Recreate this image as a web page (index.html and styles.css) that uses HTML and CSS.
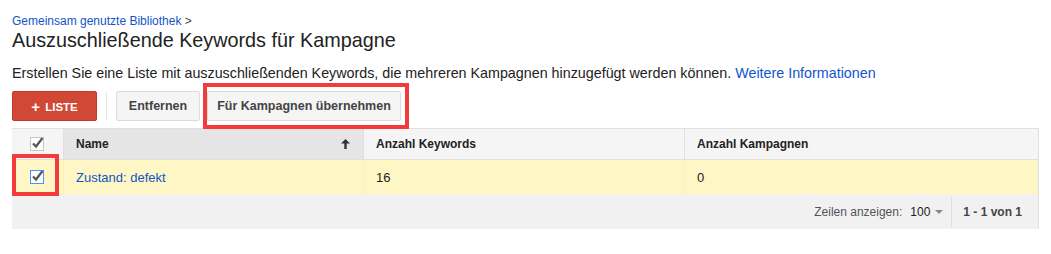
FILE: index.html
```html
<!DOCTYPE html>
<html lang="de">

<head>
    <meta charset="UTF-8">
    <meta name="viewport" content="width=device-width, initial-scale=1.0">
    <title>Auszuschließende Keywords für Kampagne</title>

    <link rel="stylesheet" href="styles.css">
</head>

<body>

    <div class="page">
        <a class="crumb" href="#">Gemeinsam genutzte Bibliothek</a><span class="crumb-sep"> &gt;</span>
        <h1 class="title">Auszuschließende Keywords für Kampagne</h1>
        <p class="intro">Erstellen Sie eine Liste mit auszuschließenden Keywords, die mehreren Kampagnen hinzugefügt werden können. <a href="#">Weitere Informationen</a></p>

        <div class="toolbar">
            <button class="btn btn-red"><span class="plus">+</span> LISTE</button>
            <span class="sep"></span>
            <button class="btn btn-remove">Entfernen</button>
            <button class="btn btn-apply">Für Kampagnen übernehmen</button>
            <span class="mark mark-apply"></span>
        </div>

        <div class="grid">
            <div class="row head">
                <div class="cell check">
                    <svg class="box" width="17" height="17" viewBox="0 0 17 17">
                        <rect x="0.5" y="2.5" width="13" height="13" fill="#fff" stroke="#c6c6c6"/>
                        <path d="M3 8.5 L6 11.5 L12.5 3" fill="none" stroke="#555" stroke-width="2.2"/>
                    </svg>
                </div>
                <div class="cell name sorted">Name
                    <svg class="arrow" width="9" height="10" viewBox="0 0 9 10">
                        <path d="M4.5 0 L9 4.5 L5.7 4.5 L5.7 10 L3.3 10 L3.3 4.5 L0 4.5 Z" fill="#333"/>
                    </svg>
                </div>
                <div class="cell kw">Anzahl Keywords</div>
                <div class="cell camp">Anzahl Kampagnen</div>
            </div>
            <div class="row data">
                <div class="cell check">
                    <svg class="box" width="17" height="17" viewBox="0 0 17 17">
                        <rect x="0.5" y="2.5" width="13" height="13" fill="#fff" stroke="#4d90fe"/>
                        <path d="M3 8.5 L6 11.5 L12.5 3" fill="none" stroke="#555" stroke-width="2.2"/>
                    </svg>
                </div>
                <div class="cell name"><a href="#">Zustand: defekt</a></div>
                <div class="cell kw">16</div>
                <div class="cell camp">0</div>
                <span class="mark mark-check"></span>
            </div>
            <div class="foot">
                <span class="label">Zeilen anzeigen:</span>
                <span class="count">100</span>
                <span class="caret"></span>
                <span class="vsep"></span>
                <span class="range">1 - 1 von 1</span>
            </div>
        </div>
    </div>

</body>

</html>
```

FILE: styles.css
```css
body {
    margin: 0;
    font-family: "Liberation Sans", Arial, sans-serif;
    color: #222;
    background: #fff;
}

a {
    color: #15c;
    text-decoration: none;
}

.page {
    width: 1027px;
    padding: 11px 0 0 12px;
}

.crumb,
.crumb-sep {
    font-size: 12px;
    line-height: 15px;
}

.crumb-sep {
    color: #444;
}

.title {
    margin: 0;
    font-size: 19.8px;
    font-weight: normal;
    line-height: 22px;
    color: #222;
}

.intro {
    margin: 14px 0 0;
    font-size: 14.3px;
    line-height: 16px;
}

.toolbar {
    position: relative;
    display: flex;
    align-items: center;
    margin-top: 10px;
    height: 30px;
}

.btn {
    height: 30px;
    padding: 0;
    border: 1px solid #dcdcdc;
    border-radius: 2px;
    background: #f5f5f5;
    font-family: inherit;
    font-size: 12.5px;
    font-weight: bold;
    color: #444;
    margin-right: 7px;
}

.btn-red {
    width: 85px;
    background: #d14836;
    border-color: #c53727;
    color: #fff;
    font-size: 11.5px;
    margin-right: 0;
}

.plus {
    font-size: 15px;
    vertical-align: -1px;
    margin-right: 2px;
}

.sep {
    width: 1px;
    height: 28px;
    background: #e5e5e5;
    margin: 0 9px;
}

.btn-remove {
    width: 84px;
}

.btn-apply {
    width: 194px;
}

.mark {
    position: absolute;
    border: 4px solid #f33b3b;
    box-sizing: border-box;
}

.mark-apply {
    left: 191px;
    top: -8px;
    width: 206px;
    height: 46px;
}

.grid {
    margin-top: 7px;
    width: 1027px;
    border-top: 1px solid #e0e0e0;
    border-right: 1px solid #e0e0e0;
    box-sizing: border-box;
}

.row {
    position: relative;
    display: flex;
    font-size: 12px;
}

.cell {
    box-sizing: border-box;
    padding: 0 12px;
    display: flex;
    align-items: center;
}

.head {
    height: 31px;
    box-sizing: border-box;
    background: #f5f5f5;
    font-weight: bold;
    border-bottom: 1px solid #e0e0e0;
}

.head .cell + .cell {
    border-left: 1px solid #e0e0e0;
}

.head .sorted {
    background: #e5e5e5;
    border-left: none;
}

.check {
    width: 51px;
    justify-content: center;
    padding: 0 0 0 2px;
}

.box {
    position: relative;
    top: -1px;
}

.name {
    width: 300px;
}

.kw {
    width: 321px;
}

.camp {
    flex: 1;
}

.arrow {
    margin-left: auto;
    margin-right: 1px;
}

.data {
    height: 34px;
    background: #fff6c5;
    font-size: 13px;
}

.data .cell + .cell {
    border-left: 1px solid #fff0b0;
}

.mark-check {
    left: 0;
    top: -6px;
    width: 47px;
    height: 42px;
}

.foot {
    height: 35px;
    background: #f1f1f1;
    display: flex;
    align-items: center;
    justify-content: flex-end;
    padding-right: 16px;
    font-size: 12px;
    color: #555;
}

.count {
    margin-left: 8px;
    color: #222;
}

.caret {
    margin-left: 5px;
    border-left: 4px solid transparent;
    border-right: 4px solid transparent;
    border-top: 4px solid #888;
}

.vsep {
    width: 1px;
    height: 30px;
    background: #ddd;
    margin: 0 11px 0 8px;
}

.range {
    font-weight: bold;
    color: #444;
}
```
